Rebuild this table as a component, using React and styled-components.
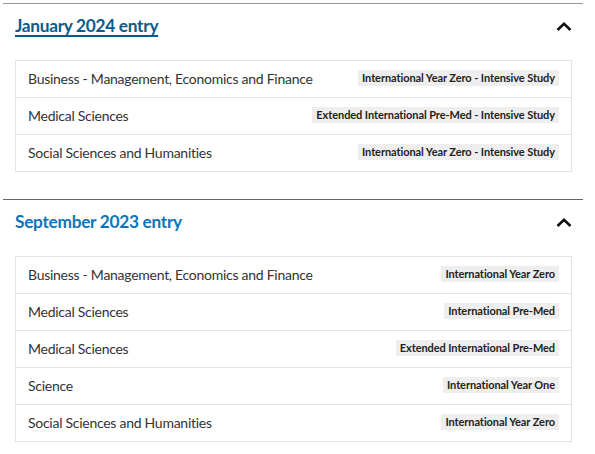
import React from "react";
import styled, { createGlobalStyle } from "styled-components";

const Global = createGlobalStyle`
  html, body { margin: 0; padding: 0; background: #fff; }
  body { font-family: Lato, "Noto Sans", sans-serif; }
`;

const Page = styled.div`
  padding: 3px 0 0 3px;
  width: 580px;
`;

const Section = styled.section`
  border-top: 1px solid ${(p) => p.$rule};
  padding: 0 11px 0 12px;
  margin-bottom: 27px;
`;

const Header = styled.div`
  display: flex;
  align-items: center;
  justify-content: space-between;
  padding: 10px 0 22px;
`;

const Title = styled.h2`
  margin: 0;
  font-size: 17.3px;
  letter-spacing: -0.3px;
  line-height: 24px;
  font-weight: 700;
  color: ${(p) => (p.$active ? "#0b5a89" : "#0e74b8")};
  text-decoration: ${(p) => (p.$active ? "underline" : "none")};
  text-decoration-thickness: 2px;
  text-underline-offset: 3px;
`;

const Toggle = styled.span`
  display: flex;
  width: 18px;
  height: 12px;
  align-items: center;
  justify-content: center;
  margin-right: -1px;
`;

const Table = styled.div`
  border: 1px solid #e3e3e3;
`;

const Row = styled.div`
  display: flex;
  align-items: center;
  justify-content: space-between;
  height: 34px;
  padding: 0 12px 2px;
  border-top: 1px solid #e3e3e3;
  &:first-child { border-top: none; }
`;

const Name = styled.span`
  font-size: 14px;
  letter-spacing: -0.27px;
  color: #333;
`;

const Badge = styled.span`
  background: #eeeeee;
  color: #222;
  font-size: 11px;
  letter-spacing: -0.08px;
  font-weight: 700;
  line-height: 16px;
  padding: 0 4px;
`;

const Chevron = () => (
  <svg width="16" height="9" viewBox="0 0 16 9">
    <path d="M1.5 8 L8 1.8 L14.5 8" fill="none" stroke="#111" strokeWidth="2.6" strokeLinecap="butt" />
  </svg>
);

const data = [
  {
    title: "January 2024 entry",
    active: true,
    rule: "#9a9a9a",
    rows: [
      ["Business - Management, Economics and Finance", "International Year Zero - Intensive Study"],
      ["Medical Sciences", "Extended International Pre-Med - Intensive Study"],
      ["Social Sciences and Humanities", "International Year Zero - Intensive Study"],
    ],
  },
  {
    title: "September 2023 entry",
    active: false,
    rule: "#666",
    rows: [
      ["Business - Management, Economics and Finance", "International Year Zero"],
      ["Medical Sciences", "International Pre-Med"],
      ["Medical Sciences", "Extended International Pre-Med"],
      ["Science", "International Year One"],
      ["Social Sciences and Humanities", "International Year Zero"],
    ],
  },
];

export default function App() {
  return (
    <Page>
      <Global />
      {data.map((s) => (
        <Section key={s.title} $rule={s.rule}>
          <Header>
            <Title $active={s.active}>{s.title}</Title>
            <Toggle><Chevron /></Toggle>
          </Header>
          <Table>
            {s.rows.map(([n, b], i) => (
              <Row key={i}>
                <Name>{n}</Name>
                <Badge>{b}</Badge>
              </Row>
            ))}
          </Table>
        </Section>
      ))}
    </Page>
  );
}
